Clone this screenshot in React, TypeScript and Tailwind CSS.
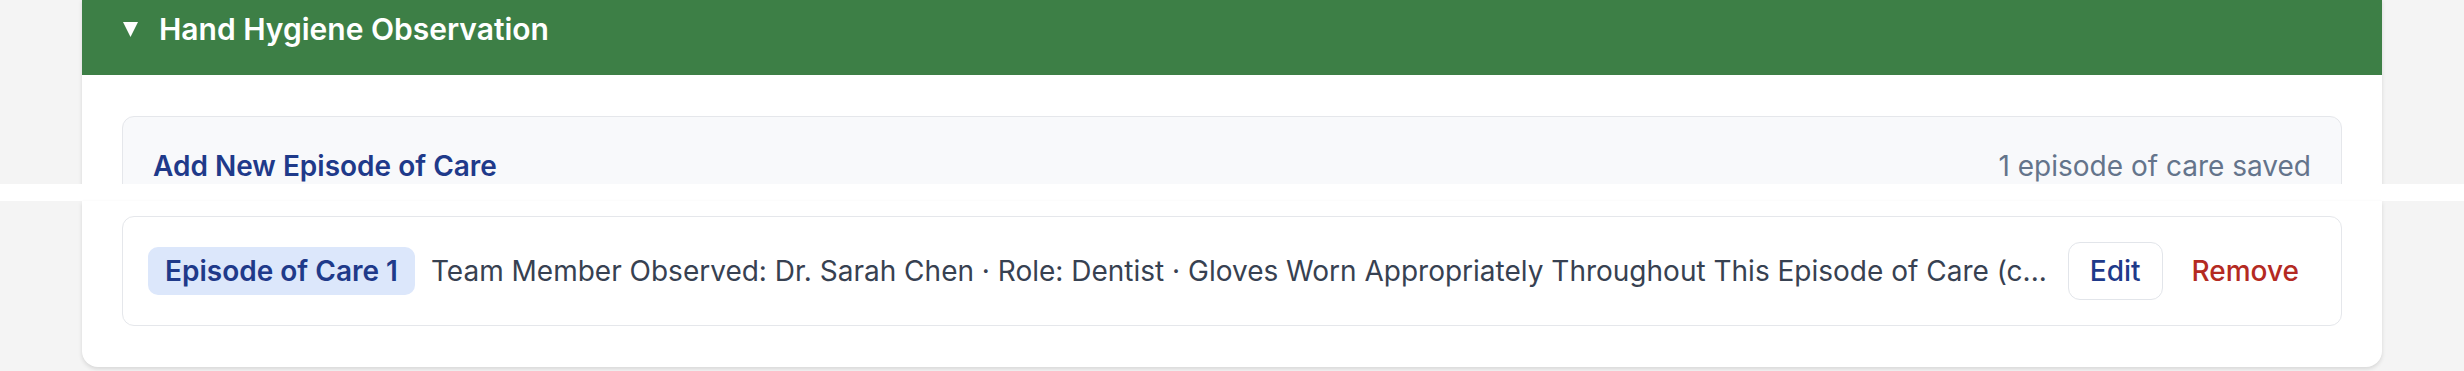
import React from "react";

const summary =
  "Team Member Observed: Dr. Sarah Chen · Role: Dentist · Gloves Worn Appropriately Throughout This Episode of Care (c...";

export default function App() {
  return (
    <div className="h-[371px] w-[2464px] overflow-hidden bg-[#f4f4f4] font-['Inter','Liberation_Sans',sans-serif]">
      {/* top slice: header + add form (cut off) */}
      <div className="h-[184px] overflow-hidden px-[82px]">
        <div className="bg-white shadow-[0_1px_4px_rgba(0,0,0,0.12)]">
          <div className="flex h-[75px] items-start bg-[#3d7f46] px-[41px] pt-[9px]">
            <div className="flex h-[40px] items-center gap-[21px]">
              <svg width="15" height="15" viewBox="0 0 15 15" className="mt-[1px]">
                <polygon points="0,0 15,0 7.5,15" fill="#ffffff" />
              </svg>
              <h2 className="text-[30px] leading-[40px] font-semibold text-white">
                Hand Hygiene Observation
              </h2>
            </div>
          </div>
          <div className="px-[40px] pt-[41px]">
            <div className="h-[200px] rounded-t-[12px] border border-[#e5e7eb] bg-[#f8f9fb] px-[30px] pt-[31px]">
              <div className="flex items-center justify-between">
                <h3 className="text-[28px] leading-[36px] font-semibold text-[#1f3a8a]">
                  Add New Episode of Care
                </h3>
                <span className="text-[28px] leading-[36px] text-[#64748b]">
                  1 episode of care saved
                </span>
              </div>
            </div>
          </div>
        </div>
      </div>

      <div className="h-[17px] bg-white" />

      {/* bottom slice: saved episode list */}
      <div className="px-[82px]">
        <div className="rounded-b-[16px] bg-white px-[40px] pt-[15px] pb-[41px] shadow-[0_2px_4px_rgba(0,0,0,0.12)]">
          <div className="flex h-[110px] items-center rounded-[12px] border border-[#e5e7eb] pl-[25px] pr-[20px]">
            <span className="flex h-[48px] shrink-0 items-center rounded-[10px] bg-[#dce7fb] px-[17px] text-[28px] font-semibold text-[#1f3a8a]">
              Episode of Care 1
            </span>
            <p className="ml-[16px] min-w-0 flex-1 whitespace-nowrap text-[28px] text-[#374151]">
              {summary}
            </p>
            <div className="ml-[16px] flex shrink-0 items-center gap-[7px]">
              <button className="h-[58px] rounded-[12px] border border-[#e2e5ea] bg-white px-[21px] text-[28px] font-medium text-[#1f3a8a]">
                Edit
              </button>
              <button className="h-[58px] rounded-[12px] border border-transparent px-[21px] text-[28px] font-medium text-[#b42a22]">
                Remove
              </button>
            </div>
          </div>
        </div>
      </div>
    </div>
  );
}
